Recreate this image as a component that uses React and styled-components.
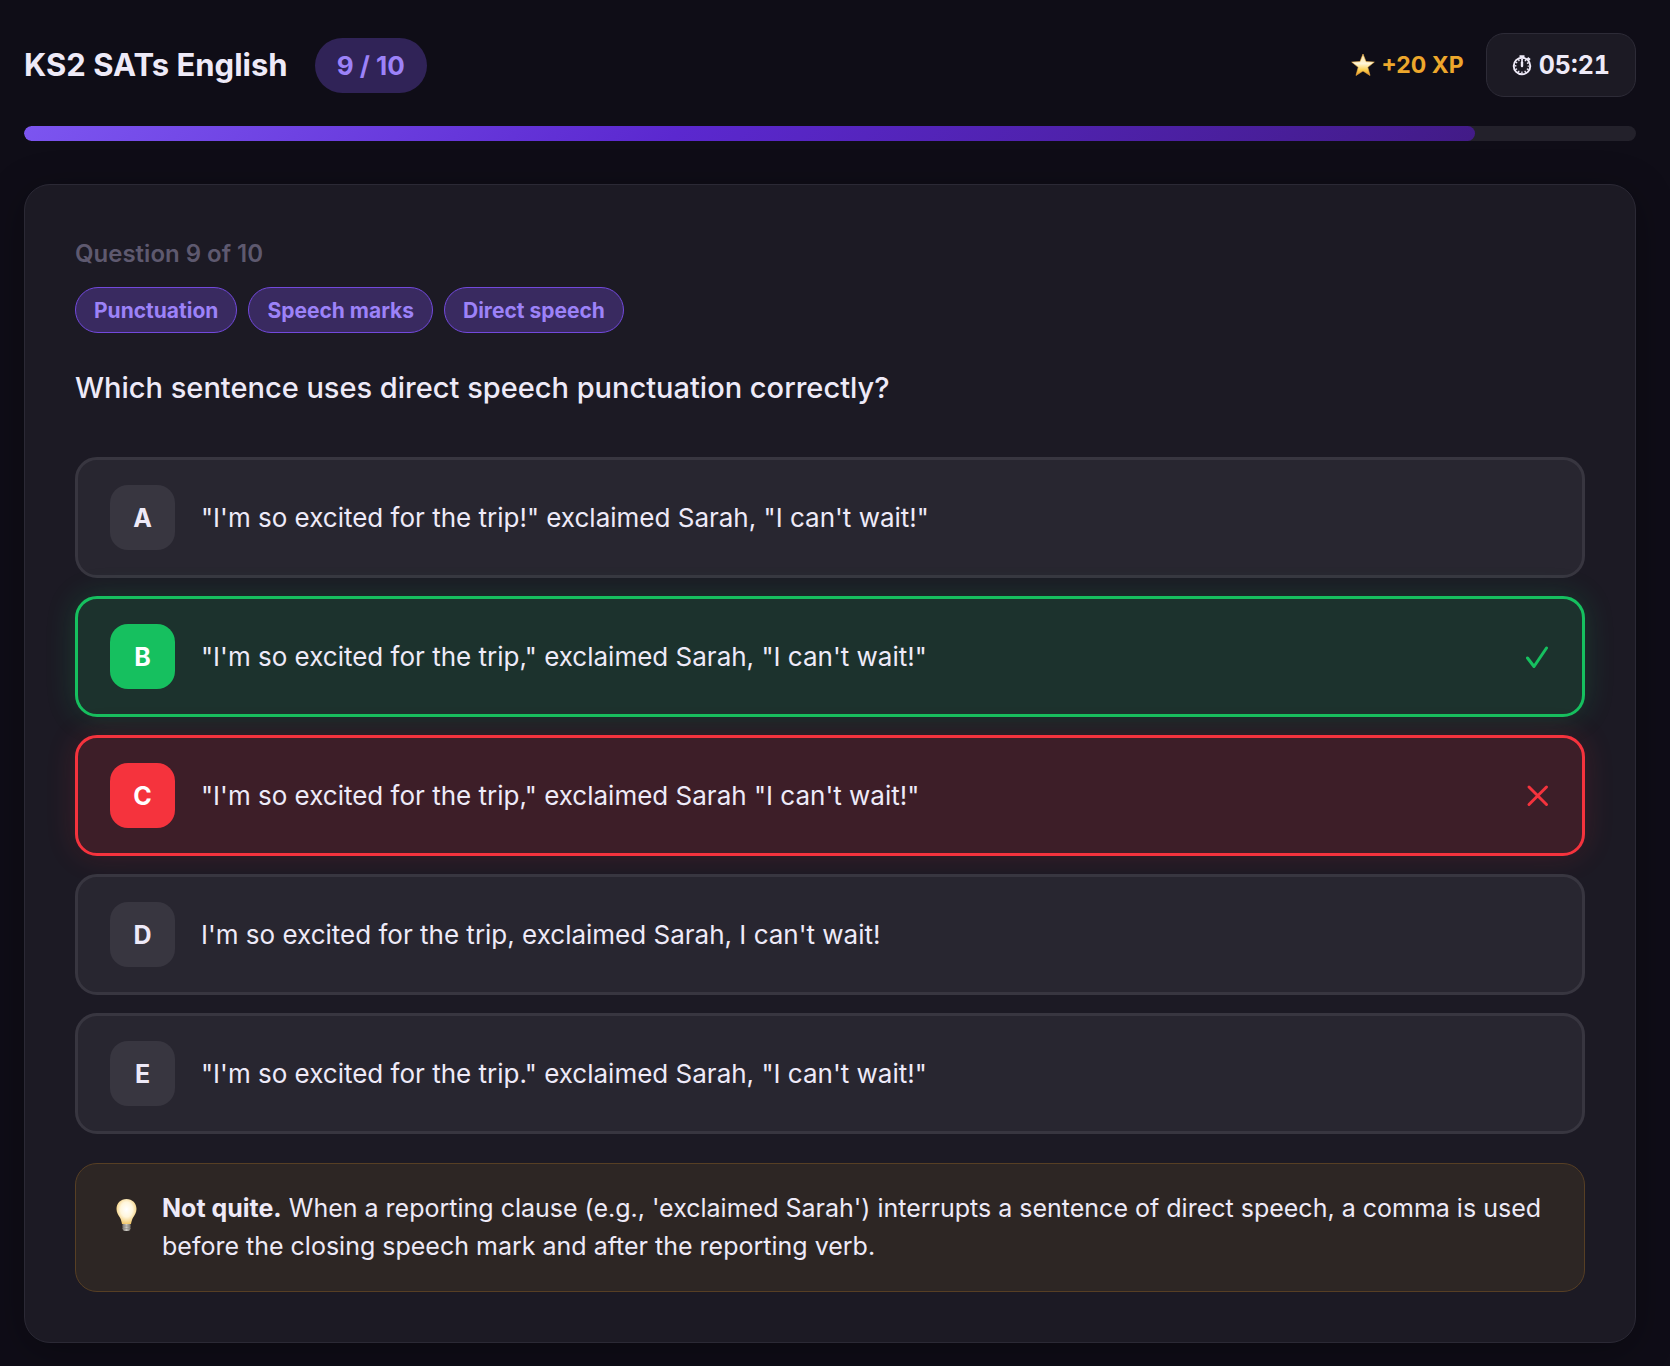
import React from "react";
import styled, { createGlobalStyle, css } from "styled-components";

const GlobalStyle = createGlobalStyle`
  *, *::before, *::after { box-sizing: border-box; }
  html { background: #0f0d17; }
  body {
    margin: 0;
    color: #eeeaf8;
    font-family: Inter, "Liberation Sans", sans-serif;
    -webkit-font-smoothing: antialiased;
  }
`;

const Page = styled.main`
  padding: 33px 34px 23px 24px;
`;

const Header = styled.header`
  display: flex;
  align-items: center;
  justify-content: space-between;
  margin-bottom: 29px;
`;

const HeaderGroup = styled.div`
  display: flex;
  align-items: center;
  gap: ${(p) => p.$gap}px;
`;

const Title = styled.h1`
  margin: 0;
  font-size: 31px;
  line-height: 40px;
  font-weight: 700;
`;

const Counter = styled.span`
  padding: 9px 22px;
  border-radius: 28px;
  background: #302357;
  color: #9c82f8;
  font-size: 26px;
  line-height: 37px;
  font-weight: 700;
`;

const Xp = styled.span`
  display: flex;
  align-items: center;
  gap: 6px;
  color: #eda72c;
  font-size: 23px;
  line-height: 32px;
  font-weight: 700;
`;

const Timer = styled.div`
  display: flex;
  align-items: center;
  gap: 7px;
  padding: 12px 25px;
  border: 1px solid #2d2b37;
  border-radius: 18px;
  background: #1c1a24;
  font-size: 25px;
  line-height: 38px;
  font-weight: 700;
  font-variant-numeric: tabular-nums;
`;

const Track = styled.div`
  height: 15px;
  margin-bottom: 43px;
  border-radius: 8px;
  background: #23212b;
  overflow: hidden;
`;

const Fill = styled.div`
  height: 100%;
  border-radius: 8px;
  background: linear-gradient(135deg, #7c55f0 0%, #5b28cf 45%, #421b87 100%);
`;

const Card = styled.section`
  padding: 50px;
  border: 1px solid #2b2935;
  border-radius: 26px;
  background: #1c1a24;
  box-shadow: 0 8px 40px rgba(0, 0, 0, 0.3);
`;

const QuestionLabel = styled.p`
  margin: 0 0 14px;
  color: #5e596f;
  font-size: 24px;
  line-height: 38px;
  font-weight: 600;
`;

const Tags = styled.ul`
  display: flex;
  flex-wrap: wrap;
  gap: 11px;
  margin: 0 0 33px;
  padding: 0;
  list-style: none;
`;

const Tag = styled.li`
  padding: 8px 18px 6px;
  border: 1px solid #7249dc;
  border-radius: 23px;
  background: #392a60;
  color: #9c82f8;
  font-size: 21px;
  line-height: 30px;
  font-weight: 700;
`;

const Question = styled.h2`
  margin: 0 0 47px;
  font-size: 29px;
  line-height: 44px;
  font-weight: 500;
`;

const Options = styled.div`
  display: grid;
  gap: 18px;
`;

const states = {
  idle: css`
    border-color: #383640;
    background: #282630;
    --badge: #383640;
  `,
  correct: css`
    border-color: #16c05f;
    background: #1c322d;
    box-shadow: 0 0 30px rgba(22, 192, 95, 0.2);
    --badge: #16c05f;
    --badge-text: #ffffff;
  `,
  wrong: css`
    border-color: #f5333d;
    background: #3d1e28;
    box-shadow: 0 0 30px rgba(245, 51, 61, 0.15);
    --badge: #f5333d;
    --badge-text: #ffffff;
  `,
};

const OptionButton = styled.button`
  display: flex;
  align-items: center;
  gap: 26px;
  width: 100%;
  padding: 25px 32px;
  border: 3px solid;
  border-radius: 22px;
  color: inherit;
  font: inherit;
  text-align: left;
  ${(p) => states[p.$state]}
`;

const Letter = styled.span`
  display: grid;
  place-items: center;
  flex: none;
  width: 65px;
  height: 65px;
  border-radius: 18px;
  background: var(--badge);
  color: var(--badge-text, inherit);
  font-size: 25px;
  font-weight: 700;
`;

const OptionText = styled.span`
  flex: 1;
  font-size: 26px;
  line-height: 38px;
`;

const Mark = styled.svg`
  flex: none;
  fill: none;
  stroke: ${(p) => p.$color};
  stroke-width: 3;
  stroke-linecap: round;
  stroke-linejoin: round;
`;

const Feedback = styled.aside`
  display: flex;
  gap: 24px;
  margin-top: 29px;
  padding: 25px 40px 26px;
  border: 1px solid #573f24;
  border-radius: 22px;
  background: #2d2624;
`;

const Bulb = styled.svg`
  flex: none;
  margin-top: 9px;
`;

const FeedbackText = styled.p`
  margin: 0;
  font-size: 25px;
  line-height: 38px;
`;

const StarIcon = () => (
  <svg width="24" height="24" viewBox="0 0 24 24" aria-hidden="true">
    <defs>
      <linearGradient id="star" x1="0" y1="0" x2="0" y2="1">
        <stop offset="0" stopColor="#fbe3a0" />
        <stop offset="0.45" stopColor="#fff6d8" />
        <stop offset="0.75" stopColor="#fbd04f" />
        <stop offset="1" stopColor="#e98a1c" />
      </linearGradient>
    </defs>
    <path
      d="M12 1l3 7.600 8.300.5-6.500 5.200 2.200 8.200L12 18 5 22.500l2.200-8.200L.7 9.100l8.300-.5z"
      fill="url(#star)"
      stroke="#efae45"
      strokeWidth="0.6"
      strokeLinejoin="round"
    />
  </svg>
);

const StopwatchIcon = () => (
  <svg width="20" height="22" viewBox="0 0 20 22" fill="none" stroke="#eeeaf8" aria-hidden="true">
    <circle cx="10" cy="12" r="8.300" strokeWidth="1.900" />
    <circle cx="10" cy="12" r="6.600" strokeWidth="2" strokeDasharray="1.400 2.056" strokeDashoffset="0.700" />
    <path d="M10 5v7" strokeWidth="1.500" />
    <path d="M10 8.500v3.500" strokeWidth="2.400" strokeLinecap="round" />
    <path d="M7.500 2.300h5M15.500 3.800l2.500 2" strokeWidth="2.200" />
  </svg>
);

const BulbIcon = () => (
  <Bulb width="22" height="34" viewBox="0 0 22 34" aria-hidden="true">
    <defs>
      <radialGradient id="glass" cx="0.5" cy="0.42" r="0.6">
        <stop offset="0" stopColor="#ffffff" />
        <stop offset="0.5" stopColor="#fff6dc" />
        <stop offset="1" stopColor="#f0c566" />
      </radialGradient>
      <linearGradient id="base" x1="0" y1="0" x2="1" y2="0">
        <stop offset="0" stopColor="#77736c" />
        <stop offset="0.5" stopColor="#c9c7c1" />
        <stop offset="1" stopColor="#77736c" />
      </linearGradient>
    </defs>
    <path d="M6.500 25h8v5.500q0 2-2 2.500h-4q-2-.5-2-2.500z" fill="url(#base)" />
    <path d="M6.500 28h8M6.500 30.500h8" stroke="#8b8780" strokeWidth="0.600" />
    <path
      d="M10.500 1C4.700 1 .5 5.300.5 11c0 3.800 1.900 6 3.400 8.600 1.200 2.200 1.600 4.200 2.100 6.400h9c.5-2.200.9-4.200 2.100-6.400 1.500-2.600 3.400-4.800 3.400-8.600C20.500 5.300 16.300 1 10.500 1z"
      fill="url(#glass)"
    />
  </Bulb>
);

const CheckIcon = () => (
  <Mark $color="#16c05f" width="24" height="24" viewBox="0 0 24 24" role="img" aria-label="Correct">
    <path d="M1.500 13l6.500 8.500L20.500 3" />
  </Mark>
);

const CrossIcon = () => (
  <Mark $color="#f5333d" width="24" height="24" viewBox="0 0 24 24" role="img" aria-label="Incorrect">
    <path d="M3 3l17.500 17.500M20.500 3L3 20.500" />
  </Mark>
);

const tags = ["Punctuation", "Speech marks", "Direct speech"];

const options = [
  { letter: "A", state: "idle", text: `"I'm so excited for the trip!" exclaimed Sarah, "I can't wait!"` },
  { letter: "B", state: "correct", text: `"I'm so excited for the trip," exclaimed Sarah, "I can't wait!"` },
  { letter: "C", state: "wrong", text: `"I'm so excited for the trip," exclaimed Sarah "I can't wait!"` },
  { letter: "D", state: "idle", text: `I'm so excited for the trip, exclaimed Sarah, I can't wait!` },
  { letter: "E", state: "idle", text: `"I'm so excited for the trip." exclaimed Sarah, "I can't wait!"` },
];

export default function App() {
  const current = 9;
  const total = 10;
  return (
    <>
      <GlobalStyle />
      <Page>
        <Header>
          <HeaderGroup $gap={27}>
            <Title>KS2 SATs English</Title>
            <Counter>{`${current} / ${total}`}</Counter>
          </HeaderGroup>
          <HeaderGroup $gap={22}>
            <Xp>
              <StarIcon />
              +20 XP
            </Xp>
            <Timer>
              <StopwatchIcon />
              05:21
            </Timer>
          </HeaderGroup>
        </Header>
        <Track role="progressbar" aria-label="Quiz progress" aria-valuemin={0} aria-valuemax={total} aria-valuenow={current}>
          <Fill style={{ width: `${(current / total) * 100}%` }} />
        </Track>
        <Card>
          <QuestionLabel>{`Question ${current} of ${total}`}</QuestionLabel>
          <Tags>
            {tags.map((tag) => (
              <Tag key={tag}>{tag}</Tag>
            ))}
          </Tags>
          <Question>Which sentence uses direct speech punctuation correctly?</Question>
          <Options>
            {options.map(({ letter, state, text }) => (
              <OptionButton key={letter} type="button" $state={state}>
                <Letter>{letter}</Letter>
                <OptionText>{text}</OptionText>
                {state === "correct" && <CheckIcon />}
                {state === "wrong" && <CrossIcon />}
              </OptionButton>
            ))}
          </Options>
          <Feedback>
            <BulbIcon />
            <FeedbackText>
              <strong>Not quite.</strong> When a reporting clause (e.g., 'exclaimed Sarah') interrupts a sentence of direct
              speech, a comma is used before the closing speech mark and after the reporting verb.
            </FeedbackText>
          </Feedback>
        </Card>
      </Page>
    </>
  );
}
